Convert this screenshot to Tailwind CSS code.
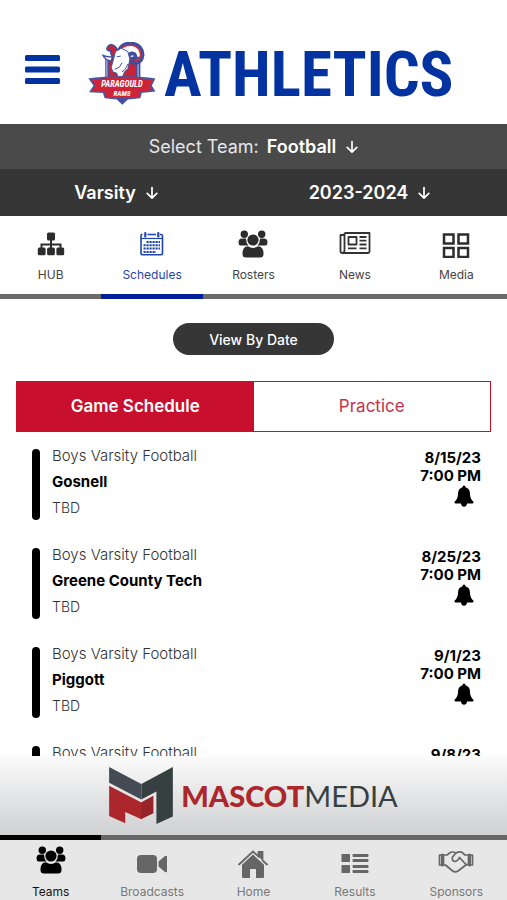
<!DOCTYPE html>
<html lang="en">
<head>
    <meta charset="UTF-8">
    <meta name="viewport" content="width=device-width, initial-scale=1.0">
    <title>Paragould Rams Athletics</title>
    <script src="https://cdn.jsdelivr.net/npm/@tailwindcss/browser@4"></script>
</head>
<body class="bg-white font-['Inter','Liberation_Sans',sans-serif]">
    <!-- Shared icons -->
    <svg class="hidden">
        <symbol id="arrow-down" viewBox="0 0 12 14">
            <path d="M6 1.5v10.5M1.2 7.4L6 12.2l4.800-4.800" fill="none" stroke="currentColor" stroke-width="1.700" stroke-linecap="round" stroke-linejoin="round"/>
        </symbol>
        <symbol id="people" viewBox="0 0 30 28">
            <g fill="currentColor">
                <circle cx="6.300" cy="4.200" r="3.700"/>
                <circle cx="23.700" cy="4.200" r="3.700"/>
                <path d="M0.500 12.500Q0.500 8.500 4 8.500H8Q8 13 10.500 15.500H2.500Q0.500 15 0.500 12.500zM29.500 12.500Q29.500 8.500 26 8.500H22Q22 13 19.500 15.500H27.500Q29.500 15 29.500 12.500z"/>
                <circle cx="15" cy="10" r="5.600"/>
                <path d="M4.500 24Q4.500 16.300 10 16.300Q15 19.500 20 16.300Q25.500 16.300 25.500 24Q25.500 27.500 22 27.500H8Q4.500 27.500 4.500 24z"/>
            </g>
        </symbol>
        <symbol id="bell" viewBox="0 0 20 22">
            <path d="M10 0.500Q11.500 0.500 11.500 2.200Q16 3.500 16 9Q16 14 19.500 16.700Q20 18.500 18.500 18.500H13Q12.500 21.700 10 21.700Q7.500 21.700 7 18.500H1.500Q0 18.500 0.500 16.700Q4 14 4 9Q4 3.500 8.500 2.200Q8.500 0.500 10 0.500z" fill="currentColor"/>
        </symbol>
    </svg>

    <div class="flex flex-col h-screen overflow-hidden">
        <!-- Header -->
        <header class="flex items-center shrink-0 pt-6 pl-6 h-[124px]">
            <button type="button" aria-label="Menu" class="pb-2 text-[#0333a0]">
                <svg class="w-9 h-8" viewBox="0 0 36 32" fill="currentColor">
                    <rect x="1" y="1" width="35" height="6" rx="1.500"/>
                    <rect x="1" y="12.500" width="35" height="6" rx="1.500"/>
                    <rect x="1" y="24" width="35" height="6" rx="1.500"/>
                </svg>
            </button>
            <svg class="w-17 h-16 ml-7 shrink-0" viewBox="264 33 204 195" role="img" aria-label="Paragould Rams">
                <path d="M315 78H422V145H315z" fill="#3f4f9f"/>
                <path d="M320 84V145M415 84V145" stroke="#e8eaf5" stroke-width="2.500"/>
                <path d="M326 90L345 80H392L409 96V145H326z" fill="#c92338"/>
                <path d="M352 74Q330 82 332 60Q316 60 322 48Q332 34 346 48L352 56z" fill="#c92338" stroke="#3f4f9f" stroke-width="5"/>
                <path d="M308 74Q316 90 334 90L336 78Q322 80 308 74z" fill="#fff" stroke="#3f4f9f" stroke-width="4"/>
                <path d="M356 60Q366 36 396 37Q428 42 429 72Q427 98 402 97Q384 94 386 76Q392 64 404 70Q410 78 402 84" fill="none" stroke="#3f4f9f" stroke-width="11"/>
                <path d="M358 58Q370 42 396 43Q422 48 423 72Q420 91 404 90" fill="none" stroke="#d02b3f" stroke-width="5"/>
                <path d="M346 62L364 52L384 62L390 86L384 114L374 124L366 142H354L350 128L338 124L333 110Q340 88 346 62z" fill="#fff" stroke="#3f4f9f" stroke-width="3"/>
                <path d="M350 78L362 76M366 96L358 110L344 116M384 100L376 116L366 124" fill="none" stroke="#3f4f9f" stroke-width="3"/>
                <path d="M348 206H386L367 224z" fill="#3f4f9f"/>
                <path d="M268 146L284 144Q366 134 448 144L464 146L454 166L464 182L424 186L420 202Q367 210 315 202L310 186L270 184L282 166z" fill="#cf2438" stroke="#4658a5" stroke-width="5"/>
                <text x="366" y="171" text-anchor="middle" class="font-['Roboto_Condensed','Liberation_Sans',sans-serif] text-[26px] font-bold italic" fill="#fff">PARAGOULD</text>
                <text x="366" y="198" text-anchor="middle" class="font-['Roboto_Condensed','Liberation_Sans',sans-serif] text-[22px] font-bold italic" fill="#fff">RAMS</text>
            </svg>
            <h1 class="ml-2 text-[63px] leading-none font-bold text-[#0333a0] font-['Roboto_Condensed','Liberation_Sans_Narrow','Liberation_Sans',sans-serif]">ATHLETICS</h1>
        </header>

        <!-- Team filters -->
        <div class="flex items-center justify-center gap-2 shrink-0 h-[45px] bg-[#4a4a4a] text-white text-lg">
            <label for="team" class="text-gray-200">Select Team:</label>
            <select id="team" class="appearance-none field-sizing-content font-semibold">
                <option>Football</option>
            </select>
            <svg class="w-3 h-[14px] ml-0.5"><use href="#arrow-down"/></svg>
        </div>
        <div class="grid grid-cols-[232fr_275fr] shrink-0 h-[47px] bg-[#363636] text-white text-lg">
            <div class="flex items-center justify-center gap-2.5">
                <select aria-label="Level" class="appearance-none field-sizing-content font-semibold">
                    <option>Varsity</option>
                </select>
                <svg class="w-3 h-[14px]"><use href="#arrow-down"/></svg>
            </div>
            <div class="flex items-center justify-center gap-2.5">
                <select aria-label="Season" class="appearance-none field-sizing-content font-semibold">
                    <option>2023-2024</option>
                </select>
                <svg class="w-3 h-[14px]"><use href="#arrow-down"/></svg>
            </div>
        </div>

        <!-- Section tabs -->
        <nav class="grid grid-cols-5 shrink-0 text-[12px] leading-4 text-[#444]">
            <a href="#hub" class="flex flex-col items-center gap-[9px] pt-3.5 pb-[11px] border-b-5 border-[#6b6b6b]">
                <svg class="w-7 h-7 text-[#2c2c2c]" viewBox="0 0 28 28" fill="currentColor">
                    <rect x="10" y="2.500" width="8" height="8" rx="1.500"/>
                    <path d="M13 10h2v3.500h9.500V18h-2v-2.500H15V18h-2v-2.500H5.500V18h-2v-4.500H13z"/>
                    <rect x="0.800" y="17.500" width="7.800" height="7.800" rx="1.500"/>
                    <rect x="10.100" y="17.500" width="7.800" height="7.800" rx="1.500"/>
                    <rect x="19.400" y="17.500" width="7.800" height="7.800" rx="1.500"/>
                </svg>
                HUB
            </a>
            <a href="#schedules" class="flex flex-col items-center gap-[9px] pt-3.5 pb-[11px] border-b-5 border-[#03209a] text-[#1f45ad]">
                <svg class="w-7 h-7" viewBox="0 0 28 28" fill="none" stroke="currentColor">
                    <path d="M4.500 4.500H3.500Q3 4.500 3 6V23Q3 24.800 4.800 24.800H22.700Q24.500 24.800 24.500 23V6Q24.500 4.500 23 4.500H22M9.500 4.500H18" stroke-width="1.600"/>
                    <path d="M3 8.500H24.500" stroke-width="1.200"/>
                    <path d="M7.300 3V6.500M20.300 3V6.500" stroke-width="2.200" stroke-linecap="round"/>
                    <path d="M8.500 12H22M5.500 15.300H22M5.500 18.600H22M5.500 21.900H18" stroke-width="2" stroke-dasharray="2.200 0.800"/>
                </svg>
                Schedules
            </a>
            <a href="#rosters" class="flex flex-col items-center gap-[9px] pt-3.5 pb-[11px] border-b-5 border-[#6b6b6b]">
                <svg class="w-[30px] h-7 text-[#2c2c2c]"><use href="#people"/></svg>
                Rosters
            </a>
            <a href="#news" class="flex flex-col items-center gap-[9px] pt-3.5 pb-[11px] border-b-5 border-[#6b6b6b]">
                <svg class="w-8 h-7 text-[#333]" viewBox="0 0 32 28" fill="none" stroke="currentColor" stroke-width="1.800" stroke-linejoin="round">
                    <path d="M5.500 3H30.500V21.500Q30.500 23 29 23H3.500Q1.500 23 1.500 21V5H5.500"/>
                    <path d="M5.500 3V20.500Q5.500 22.500 3.500 23"/>
                    <rect x="9.500" y="7" width="8" height="7.500"/>
                    <path d="M20.500 7H27.500M20.500 10.700H27.500M20.500 14.500H27.500M9 18.300H17.500M20.500 18.300H27.500"/>
                </svg>
                News
            </a>
            <a href="#media" class="flex flex-col items-center gap-[9px] pt-3.5 pb-[11px] border-b-5 border-[#6b6b6b]">
                <svg class="w-7 h-7 text-[#2c2c2c]" viewBox="0 0 28 28" fill="none" stroke="currentColor" stroke-width="2.500">
                    <rect x="2" y="4.500" width="9.500" height="9"/>
                    <rect x="16.500" y="4.500" width="9.500" height="9"/>
                    <rect x="2" y="18" width="9.500" height="9"/>
                    <rect x="16.500" y="18" width="9.500" height="9"/>
                </svg>
                Media
            </a>
        </nav>

        <!-- Schedule -->
        <main class="flex-1 min-h-0 overflow-hidden px-4 pt-6">
            <button type="button" class="block mx-auto h-8 px-9 rounded-full bg-[#363636] text-white text-[14px] font-medium">View By Date</button>

            <div class="grid grid-cols-2 mt-[26px] border border-[#c8102e] text-[17px]">
                <button type="button" class="h-[49px] bg-[#c8102e] text-white font-semibold">Game Schedule</button>
                <button type="button" class="h-[49px] text-[#c8304c]">Practice</button>
            </div>

            <ul class="pt-[11px] pl-4 pr-2.5">
                <li class="flex h-[99px]">
                    <div class="w-2 h-[71px] mt-1.5 mr-3 rounded-full bg-black"></div>
                    <div class="flex-1 text-[15px] leading-[26px] text-[#333]">
                        <p class="font-light">Boys Varsity Football</p>
                        <p class="font-bold text-black">Gosnell</p>
                        <p class="text-[14px] font-light">TBD</p>
                    </div>
                    <div class="flex flex-col items-end pt-1.5 text-[15px] leading-[18px] font-bold text-black">
                        <p>8/15/23</p>
                        <p>7:00 PM</p>
                        <button type="button" aria-label="Notify me" class="mr-[7px]"><svg class="w-5 h-[22px]"><use href="#bell"/></svg></button>
                    </div>
                </li>
                <li class="flex h-[99px]">
                    <div class="w-2 h-[71px] mt-1.5 mr-3 rounded-full bg-black"></div>
                    <div class="flex-1 text-[15px] leading-[26px] text-[#333]">
                        <p class="font-light">Boys Varsity Football</p>
                        <p class="font-bold text-black">Greene County Tech</p>
                        <p class="text-[14px] font-light">TBD</p>
                    </div>
                    <div class="flex flex-col items-end pt-1.5 text-[15px] leading-[18px] font-bold text-black">
                        <p>8/25/23</p>
                        <p>7:00 PM</p>
                        <button type="button" aria-label="Notify me" class="mr-[7px]"><svg class="w-5 h-[22px]"><use href="#bell"/></svg></button>
                    </div>
                </li>
                <li class="flex h-[99px]">
                    <div class="w-2 h-[71px] mt-1.5 mr-3 rounded-full bg-black"></div>
                    <div class="flex-1 text-[15px] leading-[26px] text-[#333]">
                        <p class="font-light">Boys Varsity Football</p>
                        <p class="font-bold text-black">Piggott</p>
                        <p class="text-[14px] font-light">TBD</p>
                    </div>
                    <div class="flex flex-col items-end pt-1.5 text-[15px] leading-[18px] font-bold text-black">
                        <p>9/1/23</p>
                        <p>7:00 PM</p>
                        <button type="button" aria-label="Notify me" class="mr-[7px]"><svg class="w-5 h-[22px]"><use href="#bell"/></svg></button>
                    </div>
                </li>
                <li class="flex h-[99px]">
                    <div class="w-2 h-[71px] mt-1.5 mr-3 rounded-full bg-black"></div>
                    <div class="flex-1 text-[15px] leading-[26px] text-[#333]">
                        <p class="font-light">Boys Varsity Football</p>
                    </div>
                    <div class="flex flex-col items-end pt-1.5 text-[15px] leading-[18px] font-bold text-black">
                        <p>9/8/23</p>
                    </div>
                </li>
            </ul>
        </main>

        <!-- Sponsor banner -->
        <a href="#sponsor" class="flex items-center justify-center gap-2 shrink-0 h-[79px] bg-linear-to-b from-[#fbfbfb] to-[#cfd0d2]">
            <svg class="w-16 h-[57px]" viewBox="60 84 190 170">
                <path d="M60 84L156 135V181L60 131z" fill="#454b54"/>
                <path d="M250 84L156 135V181L201 157V254L250 232z" fill="#374040"/>
                <path d="M60 140L156 190V240L108 218V252L60 230z" fill="#ac272b"/>
                <path d="M155 190L192 170V222L155 240z" fill="#98242a"/>
            </svg>
            <span class="text-[29px] leading-none font-['Lato','Inter',sans-serif] text-[#374040]"><b class="font-black text-[#ac272b]">MASCOT</b>MEDIA</span>
        </a>

        <!-- Bottom navigation -->
        <nav class="grid grid-cols-5 shrink-0 bg-[#e7e7e7] text-[12px] leading-4 text-[#777]">
            <a href="#teams" class="flex flex-col items-center gap-2.5 h-[65px] pt-1.5 border-t-5 border-black text-[#111]">
                <svg class="w-[30px] h-7 text-black"><use href="#people"/></svg>
                Teams
            </a>
            <a href="#broadcasts" class="flex flex-col items-center gap-2.5 h-[65px] pt-1.5 border-t-5 border-[#666]">
                <svg class="w-8 h-7 text-[#666]" viewBox="0 0 32 28" fill="currentColor">
                    <rect x="1" y="9" width="20" height="18" rx="4"/>
                    <path d="M22.500 15.500L29 10Q31 9 31 11V25Q31 27 29 26L22.500 20.500z"/>
                </svg>
                Broadcasts
            </a>
            <a href="#home" class="flex flex-col items-center gap-2.5 h-[65px] pt-1.5 border-t-5 border-[#666]">
                <svg class="w-8 h-7 overflow-visible text-[#666]" viewBox="0 -4 32 28" fill="currentColor">
                    <path d="M2 14.500L16 1.500L21.500 6.500V2H25.500V10.300L30 14.500" fill="none" stroke="currentColor" stroke-width="1.800" stroke-linecap="round"/>
                    <path d="M22 2H26V11L22 7z"/>
                    <path d="M16 4.500L27 14.800V27Q27 28 26 28H19V19H13V28H6Q5 28 5 27V14.800z"/>
                </svg>
                Home
            </a>
            <a href="#results" class="flex flex-col items-center gap-2.5 h-[65px] pt-1.5 border-t-5 border-[#666]">
                <svg class="w-7 h-7 text-[#666]" viewBox="0 0 28 28" fill="currentColor">
                    <rect x="0.500" y="8" width="8.500" height="8" rx="0.500"/>
                    <rect x="0.500" y="19" width="8.500" height="8" rx="0.500"/>
                    <rect x="11.500" y="8" width="16" height="3" rx="1"/>
                    <rect x="11.500" y="13" width="16" height="3" rx="1"/>
                    <rect x="11.500" y="19" width="16" height="3" rx="1"/>
                    <rect x="11.500" y="24" width="16" height="3" rx="1"/>
                </svg>
                Results
            </a>
            <a href="#sponsors" class="flex flex-col items-center gap-2.5 h-[65px] pt-1.5 border-t-5 border-[#666]">
                <svg class="w-9 h-7 text-[#666]" viewBox="0 0 36 28" fill="none" stroke="currentColor" stroke-width="1.700" stroke-linejoin="round" stroke-linecap="round">
                    <path d="M1.500 9H5.500V19H1.500zM34.500 9H30.500V19H34.500z"/>
                    <path d="M4.500 9V19M31.500 9V19" stroke-width="3"/>
                    <path d="M6 9H9L12.500 6.300Q15 5.500 18 7Q21.500 5 24 6.300L27 9H30.500M6 19H7.500L14 24.500Q17 27 20 25L28.500 18.500H30.500"/>
                    <path d="M18 7L14.500 11Q13.500 15 17 15.500Q20 15 21.500 11.500L28 18.500"/>
                </svg>
                Sponsors
            </a>
        </nav>
    </div>
</body>
</html>
